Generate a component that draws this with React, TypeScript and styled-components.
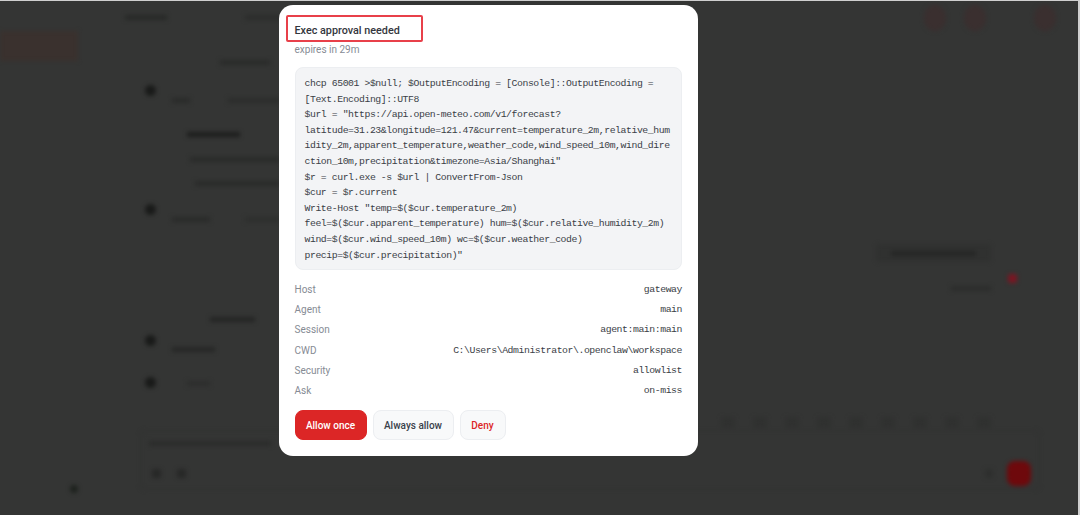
import React from "react";
import styled, { createGlobalStyle } from "styled-components";

const GlobalStyle = createGlobalStyle`
    html, body {
        margin: 0;
        padding: 0;
        height: 100%;
        background: #cfcfcf;
        overflow: hidden;
    }
`;

const Page = styled.div`
    position: relative;
    width: 1078px;
    height: 514px;
    margin-top: 1px;
    background: #343534;
    overflow: hidden;
`;

/* the blurred app behind the dialog */
const BlurredApp = styled.div`
    display: flex;
    flex-direction: column;
    height: 100%;
    filter: blur(2.2px);
`;

const TopBar = styled.div`
    display: flex;
    align-items: center;
    height: 33px;
    padding: 0 22px 0 125px;
    flex-shrink: 0;
`;

const TopBarDots = styled.div`
    display: flex;
    align-items: center;
    gap: 16px;
    margin-left: auto;
`;

const TopDot = styled.div<{ $gap?: number }>`
    width: 22px;
    height: 26px;
    margin-left: ${(p) => p.$gap ?? 0}px;
    border-radius: 50%;
    background: #3a2f2f;
`;

const Body = styled.div`
    display: flex;
    flex: 1;
    min-height: 0;
`;

const Sidebar = styled.div`
    display: flex;
    flex-direction: column;
    width: 140px;
    flex-shrink: 0;
`;

const NavActive = styled.div`
    width: 78px;
    height: 30px;
    margin-top: -3px;
    background: #3a312e;
`;

const StatusDot = styled.div`
    width: 8px;
    height: 8px;
    margin: auto 0 22px 70px;
    border-radius: 50%;
    background: #1d221d;
`;

const Chat = styled.div`
    display: flex;
    flex-direction: column;
    flex: 1;
    min-width: 0;
`;

const Bar = styled.div<{ $w: number; $top?: number; $left?: number; $tone?: string }>`
    width: ${(p) => p.$w}px;
    height: 5px;
    flex-shrink: 0;
    margin-top: ${(p) => p.$top ?? 0}px;
    margin-left: ${(p) => p.$left ?? 0}px;
    background: ${(p) => p.$tone ?? "#282928"};
`;

const MessageRow = styled.div<{ $top: number }>`
    display: flex;
    margin-top: ${(p) => p.$top}px;
    padding-left: 5px;
`;

const Avatar = styled.div`
    width: 11px;
    height: 11px;
    flex-shrink: 0;
    border-radius: 50%;
    background: #191a19;
`;

const MessageBody = styled.div`
    display: flex;
    flex-direction: column;
    margin-left: 16px;
`;

const BarLine = styled.div`
    display: flex;
`;

const ActionRow = styled.div`
    display: flex;
    justify-content: flex-end;
    gap: 17px;
    margin-top: 22px;
    padding-right: 61px;
`;

const ActionStack = styled.div`
    display: flex;
    flex-direction: column;
    align-items: flex-end;
    width: 115px;
`;

const GhostButton = styled.div`
    display: flex;
    align-items: center;
    justify-content: center;
    width: 115px;
    height: 18px;
    border-radius: 4px;
    background: #303130;
`;

const RedDot = styled.div`
    width: 9px;
    height: 9px;
    margin-top: 30px;
    border-radius: 2px;
    background: #7a1622;
`;

const ChipRow = styled.div`
    display: flex;
    gap: 18px;
    margin: 29px 0 0 581px;
`;

const Chip = styled.div`
    width: 14px;
    height: 11px;
    border-radius: 3px;
    background: #303130;
`;

const Composer = styled.div`
    display: flex;
    flex-direction: column;
    height: 60px;
    margin: 2px 38px 0 0;
    padding: 10px 8px 0;
    box-sizing: border-box;
    border: 1px solid #303130;
    border-radius: 6px;
`;

const ComposerTools = styled.div`
    display: flex;
    align-items: center;
    margin-top: 15px;
    padding-left: 3px;
`;

const ToolIcon = styled.div<{ $gap?: number; $tone?: string }>`
    width: 9px;
    height: 9px;
    margin-left: ${(p) => p.$gap ?? 0}px;
    border-radius: 2px;
    background: ${(p) => p.$tone ?? "#272827"};
`;

const SendButton = styled.div`
    width: 24px;
    height: 25px;
    margin-left: 14px;
    border-radius: 8px;
    background: #6e090c;
`;

/* dialog layer */
const Backdrop = styled.div`
    position: absolute;
    inset: 0;
    display: flex;
    align-items: flex-start;
    padding: 4px 0 0 279px;
`;

const Modal = styled.div`
    position: relative;
    display: flex;
    flex-direction: column;
    width: 419px;
    height: 451px;
    box-sizing: border-box;
    padding: 19px 16px 0 15.5px;
    border-radius: 14px;
    background: #ffffff;
    font-family: Roboto, "Open Sans", sans-serif;
`;

const Annotation = styled.div`
    position: absolute;
    left: 7px;
    top: 10px;
    width: 137px;
    height: 27px;
    box-sizing: border-box;
    border: 2px solid #e8404a;
    border-radius: 2px;
`;

const Title = styled.div`
    font-size: 10.8px;
    line-height: 14px;
    font-weight: 500;
    color: #33363d;
`;

const Expires = styled.div`
    margin-top: 5px;
    font-size: 10px;
    line-height: 14px;
    color: #868b94;
`;

const CodeBlock = styled.pre`
    margin: 10px 0 0;
    width: 387px;
    height: 203px;
    box-sizing: border-box;
    padding: 8px 9px 0;
    border: 1px solid #eceef1;
    border-radius: 8px;
    background: #f3f4f6;
    font-family: "Liberation Mono", monospace;
    font-size: 9.8px;
    line-height: 15.6px;
    letter-spacing: -0.43px;
    color: #3a3e46;
    white-space: pre-wrap;
    overflow-wrap: anywhere;
`;

const MetaList = styled.div`
    display: flex;
    flex-direction: column;
    margin-top: 9px;
`;

const MetaRow = styled.div`
    display: flex;
    align-items: center;
    justify-content: space-between;
    height: 20.3px;
`;

const MetaLabel = styled.span`
    font-size: 10px;
    color: #868b94;
`;

const MetaValue = styled.span`
    font-family: "Liberation Mono", monospace;
    font-size: 9.8px;
    letter-spacing: -0.43px;
    color: #3a3e46;
`;

const Actions = styled.div`
    display: flex;
    gap: 6px;
    margin-top: 9px;
`;

const ActionButton = styled.button<{ $variant?: "primary" | "danger"; $w: number }>`
    width: ${(p) => p.$w}px;
    height: 30px;
    padding: 2px 0 0;
    border-radius: 8px;
    border: 1px solid ${(p) => (p.$variant === "primary" ? "#dc2626" : "#eceef1")};
    background: ${(p) => (p.$variant === "primary" ? "#dc2626" : "#f8f9fa")};
    color: ${(p) => (p.$variant === "primary" ? "#ffffff" : p.$variant === "danger" ? "#dc2626" : "#3a3f4a")};
    font-family: Roboto, "Open Sans", sans-serif;
    font-size: 10px;
    font-weight: 500;
    cursor: pointer;
`;

const command = `chcp 65001 >$null; $OutputEncoding = [Console]::OutputEncoding = [Text.Encoding]::UTF8
$url = "https://api.open-meteo.com/v1/forecast?latitude=31.23&longitude=121.47&current=temperature_2m,relative_humidity_2m,apparent_temperature,weather_code,wind_speed_10m,wind_direction_10m,precipitation&timezone=Asia/Shanghai"
$r = curl.exe -s $url | ConvertFrom-Json
$cur = $r.current
Write-Host "temp=$($cur.temperature_2m) feel=$($cur.apparent_temperature) hum=$($cur.relative_humidity_2m) wind=$($cur.wind_speed_10m) wc=$($cur.weather_code) precip=$($cur.precipitation)"`;

const meta = [
    ["Host", "gateway"],
    ["Agent", "main"],
    ["Session", "agent:main:main"],
    ["CWD", "C:\\Users\\Administrator\\.openclaw\\workspace"],
    ["Security", "allowlist"],
    ["Ask", "on-miss"],
];

const App: React.FC = () => {
    return (
        <Page>
            <GlobalStyle />
            <BlurredApp aria-hidden>
                <TopBar>
                    <Bar $w={42} />
                    <Bar $w={40} $left={78} $tone="#2c2d2c" />
                    <TopBarDots>
                        <TopDot />
                        <TopDot $gap={2} />
                        <TopDot $gap={32} />
                    </TopBarDots>
                </TopBar>
                <Body>
                    <Sidebar>
                        <NavActive />
                        <StatusDot />
                    </Sidebar>
                    <Chat>
                        <Bar $w={50} $top={26} $left={80} $tone="#2a2b2a" />
                        <MessageRow $top={20}>
                            <Avatar />
                            <MessageBody>
                                <BarLine>
                                    <Bar $w={18} $top={13} $tone="#2a2b2a" />
                                    <Bar $w={52} $top={13} $left={38} $tone="#2c2d2c" />
                                </BarLine>
                                <Bar $w={53} $top={29} $left={15} $tone="#1d1e1d" />
                                <Bar $w={90} $top={20} $left={18} $tone="#2a2b2a" />
                                <Bar $w={85} $top={19} $left={23} $tone="#2a2b2a" />
                            </MessageBody>
                        </MessageRow>
                        <MessageRow $top={18}>
                            <Avatar />
                            <MessageBody>
                                <BarLine>
                                    <Bar $w={38} $top={13} $tone="#2a2b2a" />
                                    <Bar $w={35} $top={13} $left={35} $tone="#2e2f2e" />
                                </BarLine>
                            </MessageBody>
                        </MessageRow>
                        <ActionRow>
                            <ActionStack>
                                <GhostButton>
                                    <Bar $w={85} $tone="#252625" />
                                </GhostButton>
                                <Bar $w={40} $top={24} $left={0} $tone="#2c2d2c" />
                            </ActionStack>
                            <RedDot />
                        </ActionRow>
                        <Bar $w={45} $top={26} $left={70} $tone="#242524" />
                        <MessageRow $top={13}>
                            <Avatar />
                            <MessageBody>
                                <Bar $w={43} $top={12} $tone="#262726" />
                            </MessageBody>
                        </MessageRow>
                        <MessageRow $top={25}>
                            <Avatar />
                            <MessageBody>
                                <Bar $w={23} $top={4} $left={15} $tone="#2d2e2d" />
                            </MessageBody>
                        </MessageRow>
                        <ChipRow>
                            {Array.from({ length: 9 }, (_, i) => (
                                <Chip key={i} />
                            ))}
                        </ChipRow>
                        <Composer>
                            <Bar $w={122} $tone="#2b2c2b" />
                            <ComposerTools>
                                <ToolIcon />
                                <ToolIcon $gap={16} />
                                <ToolIcon $gap={799} $tone="#2e2f2e" />
                                <SendButton />
                            </ComposerTools>
                        </Composer>
                    </Chat>
                </Body>
            </BlurredApp>
            <Backdrop>
                <Modal>
                    <Annotation />
                    <Title>Exec approval needed</Title>
                    <Expires>expires in 29m</Expires>
                    <CodeBlock>{command}</CodeBlock>
                    <MetaList>
                        {meta.map(([label, value]) => (
                            <MetaRow key={label}>
                                <MetaLabel>{label}</MetaLabel>
                                <MetaValue>{value}</MetaValue>
                            </MetaRow>
                        ))}
                    </MetaList>
                    <Actions>
                        <ActionButton $variant="primary" $w={72}>Allow once</ActionButton>
                        <ActionButton $w={81}>Always allow</ActionButton>
                        <ActionButton $variant="danger" $w={46}>Deny</ActionButton>
                    </Actions>
                </Modal>
            </Backdrop>
        </Page>
    );
};

export default App;
